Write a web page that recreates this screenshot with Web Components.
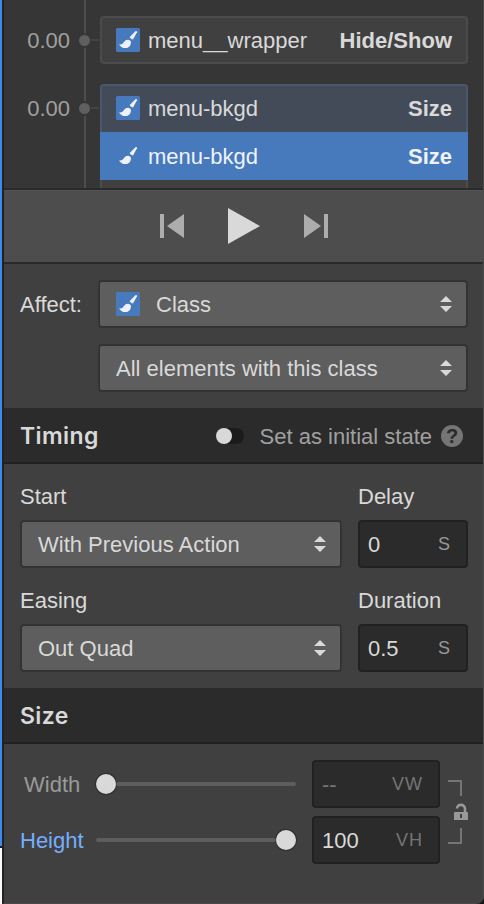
<!DOCTYPE html>
<html lang="en">
<head>
<meta charset="utf-8">
<title>Interactions panel</title>
<style>
    html, body {
        margin: 0;
        height: 100%;
        overflow: hidden;
        background: #151515;
    }

    body {
        font: 22px/26px "Liberation Sans", Arial, sans-serif;
        color: #d9d9d9;
    }
</style>
</head>
<body>

<interaction-panel>
    <time-line>
        <time-step time="0.00">
            <action-row icon="tile" name="menu__wrapper" kind="Hide/Show"></action-row>
        </time-step>
        <time-step time="0.00" open>
            <action-row icon="tile" name="menu-bkgd" kind="Size"></action-row>
            <action-row icon="plain" name="menu-bkgd" kind="Size" selected></action-row>
        </time-step>
    </time-line>

    <play-bar></play-bar>

    <affect-section>
        <select-box><brush-icon tile></brush-icon><span>Class</span></select-box>
        <select-box>All elements with this class</select-box>
    </affect-section>

    <section-head heading="Timing">
        <toggle-switch>Set as initial state</toggle-switch>
    </section-head>
    <timing-section>
        <form-field label="Start"><select-box>With Previous Action</select-box></form-field>
        <form-field label="Delay"><unit-input value="0" unit="S"></unit-input></form-field>
        <form-field label="Easing"><select-box>Out Quad</select-box></form-field>
        <form-field label="Duration"><unit-input value="0.5" unit="S"></unit-input></form-field>
    </timing-section>

    <section-head heading="Size"></section-head>
    <size-section>
        <size-slider label="Width" value="--" unit="VW" empty></size-slider>
        <size-slider label="Height" value="100" unit="VH" full></size-slider>
        <ratio-lock slot="lock"></ratio-lock>
    </size-section>
</interaction-panel>

<script>
// Base class: fills an open shadow root with the element's styles and markup
class PanelElement extends HTMLElement {
    constructor() {
        super();
        this.attachShadow({ mode: 'open' });
    }

    connectedCallback() {
        this.shadowRoot.innerHTML = `<style>* { box-sizing: border-box; } ${this.styles()}</style>${this.markup()}`;
    }

    attr(name) {
        return this.getAttribute(name) || '';
    }

    styles() { return ''; }
    markup() { return '<slot></slot>'; }
}

// ---------------- Shell ----------------
customElements.define('interaction-panel', class extends PanelElement {
    styles() {
        return `
            :host {
                display: grid;
                grid-template-columns: 2px 482px;
                width: 484px;
                height: 904px;
            }
            .page {
                background: linear-gradient(#3b8af0 846px, #1c1c1c 846px, #1c1c1c 848px, #fafafa 848px);
            }
            .panel {
                display: flex;
                flex-direction: column;
                border-left: 2px solid #222;
                border-right: 1px solid #4c4c4c;
                border-bottom: 1px solid #4a4546;
                border-bottom-right-radius: 8px;
                background: #404040;
                overflow: hidden;
            }
        `;
    }
    markup() {
        return `<div class="page"></div><div class="panel"><slot></slot></div>`;
    }
});

// ---------------- Timeline ----------------
customElements.define('time-line', class extends PanelElement {
    styles() {
        return `
            :host {
                display: flex;
                flex-direction: column;
                gap: 20px;
                height: 190px;
                box-sizing: border-box;
                padding-top: 16px;
                overflow: hidden;
                flex: none;
                border-bottom: 2px solid #2a2a2a;
                background: linear-gradient(90deg, transparent 80px, #4d4d4d 80px, #4d4d4d 82px, transparent 82px) #363636;
            }
        `;
    }
});

customElements.define('time-step', class extends PanelElement {
    styles() {
        return `
            :host {
                display: grid;
                grid-template-columns: 74px 22px 368px;
                flex: none;
            }
            .time {
                height: 48px;
                padding: 12px 8px 0 0;
                text-align: right;
                color: #a0a0a0;
            }
            .marker {
                display: flex;
                align-items: center;
                height: 48px;
            }
            .dot {
                flex: none;
                width: 15px;
                height: 15px;
                margin-left: -1.5px;
                border: 2px solid #363636;
                border-radius: 50%;
                background: #5f5f5f;
            }
            .dash {
                width: 8px;
                height: 2px;
                margin-left: -.5px;
                background: #444;
            }
            .card {
                height: 48px;
                border: 2px solid #4b4b4b;
                border-radius: 4px;
                background: #404040;
                overflow: hidden;
            }
            slot {
                display: block;
                margin: -2px;
            }
            :host([open]) .card {
                height: 116px;
                border: 0;
                background: linear-gradient(90deg, #4b4b4b 2px, #404040 2px, #404040 366px, #4b4b4b 366px);
            }
            :host([open]) slot { margin: 0; }
            :host([open]) ::slotted(:first-child) {
                background: #434b59;
                box-shadow: inset 0 2px #4c586a, inset 2px 0 #4c586a, inset -2px 0 #4c586a;
                border-radius: 4px 4px 0 0;
            }
        `;
    }
    markup() {
        return `
            <div class="time">${this.attr('time')}</div>
            <div class="marker"><div class="dot"></div><div class="dash"></div></div>
            <div class="card"><slot></slot></div>
        `;
    }
});

customElements.define('action-row', class extends PanelElement {
    styles() {
        return `
            :host {
                display: flex;
                align-items: center;
                box-sizing: border-box;
                height: 48px;
                padding: 0 16px;
            }
            :host([selected]) {
                background: #4779bd;
                color: #eff3f9;
            }
            .name {
                flex: 1;
                margin-left: 8px;
                padding-top: 2px;
            }
            b { padding-top: 2px; }
        `;
    }
    markup() {
        const tile = this.attr('icon') === 'tile' ? 'tile' : '';
        return `
            <brush-icon ${tile}></brush-icon>
            <span class="name">${this.attr('name')}</span>
            <b>${this.attr('kind')}</b>
        `;
    }
});

customElements.define('brush-icon', class extends PanelElement {
    styles() {
        return `
            :host {
                display: block;
                flex: none;
                width: 24px;
                height: 24px;
                border-radius: 1.5px;
            }
            :host([tile]) { background: #4779bd; }
            svg { display: block; }
        `;
    }
    markup() {
        return `
            <svg width="24" height="24" viewBox="0 0 24 24" fill="#eef2f8">
                <path d="M19.4 3.2 Q21 2.6 21 4.2 L17.3 10.9 L16.3 11.5 L13.8 9.8 L14 8.8 Z"/>
                <path d="M12.3 11.8 Q14.6 12.2 15 14 C15 17.6 12.9 20.1 9.3 20.1 C6.4 20.1 4.2 18.6 2.9 16.2 C4.8 16.7 6.5 16.2 7.6 14.5 C8.7 12.8 10.2 11.6 12.3 11.8 Z"/>
            </svg>
        `;
    }
});

// ---------------- Playback ----------------
customElements.define('play-bar', class extends PanelElement {
    styles() {
        return `
            :host {
                display: flex;
                flex: none;
                justify-content: center;
                align-items: center;
                gap: 44px;
                box-sizing: border-box;
                height: 74px;
                padding: 0 0 2px 1px;
                border-top: 1px solid #535353;
                border-bottom: 2px solid #292929;
                background: #4d4d4d;
            }
            svg { display: block; }
        `;
    }
    markup() {
        return `
            <svg width="24" height="24" fill="#adadad"><path d="M0 0h4v24H0zM24 0v24L7 12z"/></svg>
            <svg width="32" height="36" fill="#d9d9d9"><path d="M0 0l32 18L0 36z"/></svg>
            <svg width="24" height="24" fill="#adadad"><path d="M20 0h4v24h-4zM0 0v24l17-12z"/></svg>
        `;
    }
});

// ---------------- Form controls ----------------
customElements.define('select-box', class extends PanelElement {
    styles() {
        return `
            :host {
                display: flex;
                align-items: center;
                justify-content: space-between;
                box-sizing: border-box;
                height: 48px;
                padding: 0 14px 0 16px;
                border: 2px solid #333;
                border-radius: 4px;
                background: #5e5e5e;
            }
            .value {
                display: flex;
                align-items: center;
                gap: 16px;
                padding-top: 1px;
            }
            ::slotted(brush-icon) { margin-top: -1px; }
        `;
    }
    markup() {
        return `
            <div class="value"><slot></slot></div>
            <svg width="12" height="16" fill="#d9d9d9"><path d="M0 6l6-6 6 6zM0 10l6 6 6-6z"/></svg>
        `;
    }
});

customElements.define('unit-input', class extends PanelElement {
    styles() {
        return `
            :host {
                display: flex;
                align-items: center;
                justify-content: space-between;
                box-sizing: border-box;
                height: 48px;
                padding: 1px 15px 0 8px;
                border: 2px solid #212121;
                border-radius: 4px;
                background: #2b2b2b;
            }
            .unit {
                padding-bottom: 2px;
                font-size: 18px;
                letter-spacing: 1px;
                color: var(--unit-color, #999);
            }
        `;
    }
    markup() {
        return `<span>${this.attr('value')}</span><span class="unit">${this.attr('unit')}</span>`;
    }
});

customElements.define('form-field', class extends PanelElement {
    styles() {
        return `
            :host { display: block; }
            .label { height: 36px; }
        `;
    }
    markup() {
        return `<div class="label">${this.attr('label')}</div><slot></slot>`;
    }
});

customElements.define('toggle-switch', class extends PanelElement {
    styles() {
        return `
            :host {
                display: flex;
                align-items: center;
                color: #a0a0a0;
            }
            .track {
                width: 28px;
                height: 16px;
                margin-right: 16px;
                border-radius: 8px;
                background: #1b1b1b;
            }
            .knob {
                width: 16px;
                height: 16px;
                border-radius: 50%;
                background: #d9d9d9;
            }
            .text { padding-top: 2px; }
            .help {
                width: 22px;
                height: 22px;
                margin-left: 9px;
                border-radius: 50%;
                background: #757575;
                color: #2b2b2b;
                font: bold 20px/23px "Liberation Sans", Arial, sans-serif;
                text-align: center;
            }
        `;
    }
    markup() {
        return `
            <div class="track"><div class="knob"></div></div>
            <span class="text"><slot></slot></span>
            <div class="help">?</div>
        `;
    }
});

// ---------------- Sections ----------------
customElements.define('section-head', class extends PanelElement {
    styles() {
        return `
            :host {
                display: flex;
                flex: none;
                align-items: center;
                justify-content: space-between;
                box-sizing: border-box;
                height: 56px;
                padding: 0 20px 0 16px;
                border-bottom: 2px solid #212121;
                background: #2b2b2b;
            }
            h2 {
                margin: 0;
                padding-top: 2px;
                font: 600 23px/28px Inter, "Liberation Sans", sans-serif;
                letter-spacing: .4px;
            }
            ::slotted(*) { margin-top: 2px; }
        `;
    }
    markup() {
        return `<h2>${this.attr('heading')}</h2><slot></slot>`;
    }
});

customElements.define('affect-section', class extends PanelElement {
    styles() {
        return `
            :host {
                display: flex;
                flex: none;
                box-sizing: border-box;
                height: 144px;
                padding: 16px 15px 0 16px;
            }
            .label {
                width: 78px;
                padding-top: 12px;
            }
            .boxes {
                display: flex;
                flex: 1;
                flex-direction: column;
                gap: 16px;
            }
        `;
    }
    markup() {
        return `<div class="label">Affect:</div><div class="boxes"><slot></slot></div>`;
    }
});

customElements.define('timing-section', class extends PanelElement {
    styles() {
        return `
            :host {
                display: grid;
                flex: none;
                grid-template-columns: 322px 110px;
                gap: 20px 16px;
                align-content: start;
                box-sizing: border-box;
                height: 224px;
                padding: 20px 0 0 16px;
            }
        `;
    }
});

customElements.define('size-section', class extends PanelElement {
    styles() {
        return `
            :host {
                display: flex;
                gap: 8px;
                padding: 16px 0 0 16px;
            }
            .rows {
                display: flex;
                flex-direction: column;
                gap: 8px;
            }
        `;
    }
    markup() {
        return `<div class="rows"><slot></slot></div><slot name="lock"></slot>`;
    }
});

customElements.define('size-slider', class extends PanelElement {
    styles() {
        return `
            :host {
                display: grid;
                grid-template-columns: 76px 200px 128px;
                align-items: center;
                height: 48px;
                --unit-color: #757575;
            }
            .label {
                color: #76aefb;
                padding-top: 1px;
            }
            :host([empty]) .label {
                color: #999;
                padding-left: 4px;
            }
            .track {
                display: flex;
                align-items: center;
                height: 4px;
                border-radius: 2px;
                background: #5e5e5e;
            }
            .thumb {
                flex: none;
                width: 20px;
                height: 20px;
                border-radius: 50%;
                background: #d9d9d9;
                box-shadow: 0 0 0 1px rgba(0, 0, 0, .3);
            }
            :host([full]) .track { justify-content: flex-end; }
            unit-input { margin-left: 16px; width: 128px; }
            :host([empty]) unit-input { color: #757575; }
        `;
    }
    markup() {
        return `
            <span class="label">${this.attr('label')}</span>
            <div class="track"><div class="thumb"></div></div>
            <unit-input value="${this.attr('value')}" unit="${this.attr('unit')}"></unit-input>
        `;
    }
});

// Brackets joining the two inputs, with an open padlock between them
customElements.define('ratio-lock', class extends PanelElement {
    styles() {
        return `
            :host {
                display: block;
                margin: 20px 0 0 16px;
            }
            svg { display: block; }
        `;
    }
    markup() {
        return `
            <svg width="20" height="64" fill="none">
                <path d="M0 1h13v15M0 63h13V48" stroke="#757575" stroke-width="2"/>
                <path d="M9 28.5 C9 23.6 17 23.6 17 28.8 V33" stroke="#999" stroke-width="2.6"/>
                <path d="M6 33 Q6 32 7 32 H19 Q20 32 20 33 V40 H6 Z" fill="#999"/>
                <path d="M12 34h2v4h-2z" fill="#404040"/>
            </svg>
        `;
    }
});
</script>
</body>
</html>
